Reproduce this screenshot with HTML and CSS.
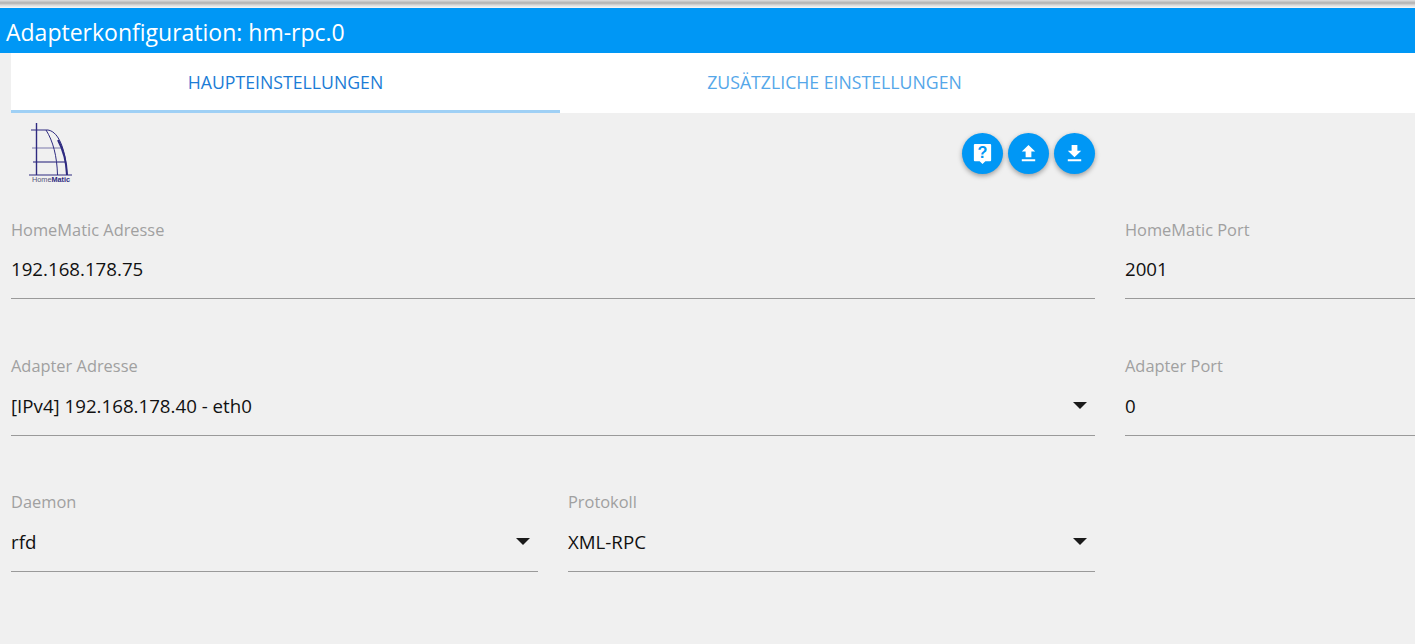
FILE: index.html
```html
<!DOCTYPE html>
<html lang="de">
<head>
    <meta charset="UTF-8">
    <meta name="viewport" content="width=device-width, initial-scale=1.0">
    <title>Adapterkonfiguration: hm-rpc.0</title>
    <link rel="stylesheet" href="styles.css">
</head>
<body>

<div class="top-strip"></div>
<h1 class="title-bar">Adapterkonfiguration: hm-rpc.0</h1>

<div class="content">
    <div class="tabs">
        <div class="tab tab-active">HAUPTEINSTELLUNGEN</div>
        <div class="tab">ZUSÄTZLICHE EINSTELLUNGEN</div>
    </div>

    <div class="tool-row">
        <svg class="logo" viewBox="0 0 46 62" aria-label="HomeMatic">
            <g fill="none" stroke="#2e2a80">
                <path d="M8.5 0V52" stroke-width="1.4"/>
                <path d="M3 7H20C32 9 38 30 39 52" stroke-width="1"/>
                <path d="M39 52C38.5 40 36 28 30 17" stroke-width="2"/>
                <path d="M18 7C25 18 29 33 29.5 52" stroke-width="1"/>
                <path d="M4 25H35" stroke-width=".6"/>
                <path d="M5 39H37" stroke-width="1.1"/>
                <path d="M1 52H44" stroke-width="1"/>
            </g>
            <text class="logo-text" x="4" y="59">Home<tspan class="logo-bold">Matic</tspan></text>
        </svg>
        <div class="round-buttons">
            <button class="round-btn" type="button">
                <svg viewBox="0 0 24 24"><path fill="#fff" d="M4 2H20A1 1 0 0 1 21 3V19A1 1 0 0 1 20 20H15L12 23L9 20H4A1 1 0 0 1 3 19V3A1 1 0 0 1 4 2Z"/><text class="help-mark" x="12" y="17">?</text></svg>
            </button>
            <button class="round-btn" type="button">
                <svg viewBox="0 0 24 24"><path fill="#fff" d="M9 16H15V10H19L12 3L5 10H9ZM5 18H19V20H5Z"/></svg>
            </button>
            <button class="round-btn" type="button">
                <svg viewBox="0 0 24 24"><path fill="#fff" d="M19 9H15V3H9V9H5L12 16ZM5 18H19V20H5Z"/></svg>
            </button>
        </div>
    </div>

    <div class="form-row">
        <div class="field field-wide">
            <label>HomeMatic Adresse</label>
            <div class="value">192.168.178.75</div>
        </div>
        <div class="field field-port">
            <label>HomeMatic Port</label>
            <div class="value">2001</div>
        </div>
    </div>

    <div class="form-row">
        <div class="field field-wide">
            <label>Adapter Adresse</label>
            <div class="value select">[IPv4] 192.168.178.40 - eth0</div>
        </div>
        <div class="field field-port">
            <label>Adapter Port</label>
            <div class="value">0</div>
        </div>
    </div>

    <div class="form-row">
        <div class="field field-half">
            <label>Daemon</label>
            <div class="value select">rfd</div>
        </div>
        <div class="field field-half">
            <label>Protokoll</label>
            <div class="value select">XML-RPC</div>
        </div>
    </div>
</div>

</body>
</html>
```

FILE: styles.css
```css
html, body {
    height: 100%;
}
body {
    margin: 0;
    overflow: hidden;
    background-color: #f0f0f0;
    font-family: "Open Sans", "Noto Sans", sans-serif;
    color: #111;
}
.top-strip {
    height: 8px;
    background: linear-gradient(#e0e0e0 0, #b0b0b0 3px, #d8d8d8 5px, #fafafa 8px);
}
.title-bar {
    margin: 0;
    height: 45px;
    line-height: 48px;
    padding-left: 6px;
    background-color: #0097f5;
    color: #fff;
    font-size: 23px;
    font-weight: 400;
}
.content {
    padding-left: 11px;
}
.tabs {
    display: flex;
    height: 60px;
    background-color: #fff;
}
.tab {
    width: 549px;
    line-height: 58px;
    text-align: center;
    font-size: 17.7px;
    color: #55a7e9;
}
.tab-active {
    color: #1b7cd6;
    border-bottom: 3px solid #9fd0f5;
    box-sizing: border-box;
}
.tool-row {
    display: flex;
    justify-content: space-between;
    width: 1084px;
    height: 96.3px;
}
.logo {
    display: block;
    width: 46px;
    height: 62px;
    margin: 10px 0 0 17px;
}
.logo-text {
    font-family: "Liberation Sans", sans-serif;
    font-size: 7.3px;
    fill: #55557a;
}
.logo-bold {
    font-weight: bold;
    fill: #2e2a80;
}
.round-buttons {
    display: flex;
    gap: 5px;
    padding-top: 20px;
}
.round-btn {
    width: 41px;
    height: 41px;
    padding: 9px;
    border: none;
    border-radius: 50%;
    background-color: #0097f5;
    box-shadow: 0 2px 5px rgba(0, 0, 0, 0.35);
}
.round-btn svg {
    display: block;
    width: 23px;
    height: 23px;
}
.help-mark {
    font-family: "Liberation Sans", sans-serif;
    font-size: 17px;
    font-weight: bold;
    text-anchor: middle;
    fill: #0097f5;
}
.form-row {
    display: flex;
    gap: 30px;
    height: 136.4px;
}
.field {
    box-sizing: border-box;
    height: 90px;
    padding-top: 8.3px;
    border-bottom: 1px solid #9a9a9a;
}
.field-wide {
    width: 1084px;
}
.field-port {
    flex: 1;
}
.field-half {
    width: 527px;
}
.field label {
    display: block;
    height: 24px;
    font-size: 16.4px;
    line-height: 24px;
    color: #a0a0a0;
}
.value {
    position: relative;
    margin-top: 15.7px;
    font-size: 18.7px;
    line-height: 24px;
}
.select::after {
    content: "";
    position: absolute;
    right: 8px;
    top: 8px;
    border-left: 7px solid transparent;
    border-right: 7px solid transparent;
    border-top: 7px solid #1a1a1a;
}
```
